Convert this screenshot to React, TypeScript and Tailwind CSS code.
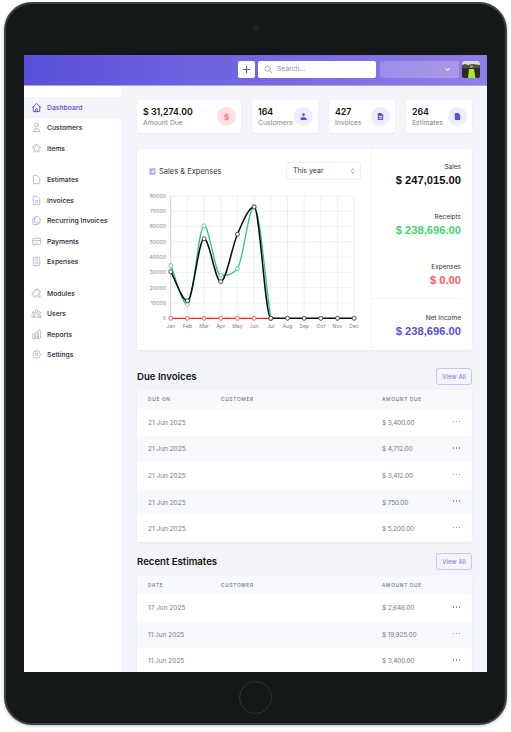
import type { ReactNode } from 'react'
import {
  HiOutlineHome,
  HiOutlineUser,
  HiOutlineStar,
  HiOutlineDocument,
  HiOutlineDocumentText,
  HiOutlineDocumentDuplicate,
  HiOutlineCreditCard,
  HiOutlineCalculator,
  HiOutlinePuzzle,
  HiOutlineUserGroup,
  HiOutlineChartBar,
  HiOutlineCog,
  HiOutlineSearch,
  HiOutlineSelector,
  HiChevronDown,
  HiPlus,
  HiUser,
  HiDocumentText,
  HiDocument,
  HiChartSquareBar,
} from 'react-icons/hi'

const MONTHS = ['Jan', 'Feb', 'Mar', 'Apr', 'May', 'Jun', 'Jul', 'Aug', 'Sep', 'Oct', 'Nov', 'Dec']
const TICKS = [80000, 70000, 60000, 50000, 40000, 30000, 20000, 10000, 0]

const SALES = [30500, 11500, 52000, 24000, 55000, 72800, 0, 0, 0, 0, 0, 0]
const RECEIPTS = [34500, 9000, 60500, 28000, 32500, 73000, 0]
const EXPENSES = [0, 0, 0, 0, 0, 0, 0]

const chartX = (i: number) => 33.7 + i * 16.68
const chartY = (v: number) => 127.3 - (v / 80000) * 122.3

// monotone spline, flat at every peak and dip like the chart lib does it
function linePath(data: number[]) {
  const pts = data.map((v, i) => [chartX(i), chartY(v)])
  const dx = 16.68
  const delta = pts.slice(1).map((p, i) => (p[1] - pts[i][1]) / dx)
  const m = pts.map((_, i) => {
    if (i === 0) return delta[0]
    if (i === pts.length - 1) return delta[i - 1]
    return delta[i - 1] * delta[i] <= 0 ? 0 : (delta[i - 1] + delta[i]) / 2
  })
  delta.forEach((d, i) => {
    if (d === 0) {
      m[i] = 0
      m[i + 1] = 0
      return
    }
    const a = m[i] / d
    const b = m[i + 1] / d
    const s = Math.hypot(a, b)
    if (s > 3) {
      m[i] = (a * 3 * d) / s
      m[i + 1] = (b * 3 * d) / s
    }
  })
  let path = `M${pts[0][0]} ${pts[0][1]}`
  for (let i = 1; i < pts.length; i++) {
    const [x0, y0] = pts[i - 1]
    const [x1, y1] = pts[i]
    path += ` C${x0 + dx / 3} ${y0 + (m[i - 1] * dx) / 3} ${x1 - dx / 3} ${y1 - (m[i] * dx) / 3} ${x1} ${y1}`
  }
  return path
}

function Series({ data, color, width = 1.3 }: { data: number[]; color: string; width?: number }) {
  return (
    <g>
      <path d={linePath(data)} fill="none" stroke={color} strokeWidth={width} />
      {data.map((v, i) => (
        <circle key={i} cx={chartX(i)} cy={chartY(v)} r="2" fill="#fff" stroke={color} strokeWidth="0.7" />
      ))}
    </g>
  )
}

function Chart() {
  return (
    <svg width="234" height="144" viewBox="0 0 234 144" className="block">
      {TICKS.map((t) => (
        <g key={t}>
          <line x1="33.7" x2="217" y1={chartY(t)} y2={chartY(t)} stroke="#ececec" strokeWidth="0.8" />
          <text x="29" y={chartY(t) + 1.9} textAnchor="end" fontSize="5.2" fill="#808080" fontFamily="Inter, sans-serif">
            {t}
          </text>
        </g>
      ))}
      {MONTHS.map((m, i) => (
        <g key={m}>
          <line x1={chartX(i)} x2={chartX(i)} y1="5" y2="127.3" stroke={i === 0 ? '#c4c4c4' : '#ececec'} strokeWidth="0.8" />
          <text x={chartX(i)} y="137" textAnchor="middle" fontSize="5.2" fill="#808080" fontFamily="Inter, sans-serif">
            {m}
          </text>
        </g>
      ))}
      <Series data={EXPENSES} color="#ff1f1f" />
      <Series data={RECEIPTS} color="#2cc196" />
      <Series data={SALES} color="#0b0b0b" width={1.5} />
    </svg>
  )
}

function Avatar() {
  return (
    <svg width="18" height="17" viewBox="0 0 18 17" className="-ml-[1px] rounded-[2px]">
      <rect width="18" height="17" fill="#2b2a24" />
      <rect width="18" height="4" fill="#d8dcd6" />
      <path d="M0 4l3-1 3 1 4-1 8 1v3H0z" fill="#4a5346" />
      <circle cx="9.5" cy="5.5" r="1.6" fill="#b98a68" />
      <path d="M6 17l1-9h5l1.5 9z" fill="#a6e825" />
    </svg>
  )
}

type NavEntry = { label: string; icon: ReactNode; active?: boolean }

const ic = 'h-[11px] w-[11px] text-[#aeb8ca]'

const NAV: NavEntry[][] = [
  [
    { label: 'Dashboard', icon: <HiOutlineHome className="h-[11px] w-[11px] text-[#5851d8]" />, active: true },
    { label: 'Customers', icon: <HiOutlineUser className={ic} /> },
    { label: 'Items', icon: <HiOutlineStar className={ic} /> },
  ],
  [
    { label: 'Estimates', icon: <HiOutlineDocument className={ic} /> },
    { label: 'Invoices', icon: <HiOutlineDocumentText className={ic} /> },
    { label: 'Recurring Invoices', icon: <HiOutlineDocumentDuplicate className={ic} /> },
    { label: 'Payments', icon: <HiOutlineCreditCard className={ic} /> },
    { label: 'Expenses', icon: <HiOutlineCalculator className={ic} /> },
  ],
  [
    { label: 'Modules', icon: <HiOutlinePuzzle className={ic} /> },
    { label: 'Users', icon: <HiOutlineUserGroup className={ic} /> },
    { label: 'Reports', icon: <HiOutlineChartBar className={ic} /> },
    { label: 'Settings', icon: <HiOutlineCog className={ic} /> },
  ],
]

function Sidebar() {
  return (
    <aside className="flex w-[97px] shrink-0 flex-col gap-[11px] bg-white pt-[11px]">
      {NAV.map((group, i) => (
        <div key={i} className="flex flex-col">
          {group.map((item) => (
            <div
              key={item.label}
              className={`flex h-[20.5px] items-center gap-[5px] pl-[7px] text-[6.8px] font-medium ${
                item.active ? 'bg-[#f3f5fa] text-[#5851d8]' : 'text-[#1f2430]'
              }`}
            >
              {item.icon}
              <span className="pt-[1px]">{item.label}</span>
            </div>
          ))}
        </div>
      ))}
    </aside>
  )
}

function StatCard({
  value,
  label,
  icon,
  className,
}: {
  value: string
  label: string
  icon: ReactNode
  className: string
}) {
  return (
    <div className={`flex h-[33px] items-center justify-between rounded-[2px] bg-white pl-[6px] pr-[5px] shadow-[0_1px_2px_rgba(40,50,90,0.08)] ${className}`}>
      <div>
        <div className="text-[8.8px] leading-[11px] font-semibold text-[#111]">{value}</div>
        <div className="text-[6.8px] leading-[11px] whitespace-nowrap text-[#7b8496]">{label}</div>
      </div>
      {icon}
    </div>
  )
}

function Badge({ red, children }: { red?: boolean; children: ReactNode }) {
  return (
    <div className={`flex h-[19px] w-[19px] shrink-0 items-center justify-center rounded-full ${red ? 'bg-[#fde0e2] text-[#fb6b73]' : 'bg-[#eaedfb] text-[#5851d8]'}`}>
      {children}
    </div>
  )
}

function Figure({ label, value, color }: { label: string; value: string; color: string }) {
  return (
    <div className="text-right">
      <div className="text-[6.5px] leading-[10px] text-[#333]">{label}</div>
      <div className={`mt-[1px] font-['Liberation_Sans',sans-serif] text-[11.2px] leading-[14px] font-bold ${color}`}>{value}</div>
    </div>
  )
}

function TableSection({
  title,
  first,
  rows,
  className,
}: {
  title: string
  first: string
  rows: [string, string][]
  className?: string
}) {
  return (
    <section className={className}>
      <div className="flex h-[17px] items-center justify-between">
        <h2 className="pt-[1px] text-[9.6px] font-semibold text-[#111]">{title}</h2>
        <div className="flex h-[17px] w-[36px] items-center justify-center rounded-[3px] border-[1.5px] border-[#c9c6f3] text-[6.2px] text-[#7a73e0]">
          View All
        </div>
      </div>
      <div className="mt-[5px] overflow-hidden rounded-[3px] bg-white shadow-[0_1px_2px_rgba(40,50,90,0.08)]">
        <div className="grid h-[19px] grid-cols-[73px_161px_1fr] items-center bg-[#f8f9fc] pt-[1px] pl-[11px] text-[4.8px] font-medium tracking-[0.7px] text-[#6b7488]">
          <span>{first}</span>
          <span>CUSTOMER</span>
          <span>AMOUNT DUE</span>
        </div>
        {rows.map(([date, amount], i) => (
          <div
            key={i}
            className={`grid h-[26.6px] grid-cols-[73px_161px_1fr_auto] items-center pl-[11px] pr-[12px] text-[6.5px] leading-[10px] text-[#6f788b] ${
              i % 2 ? 'bg-[#f8f9fc]' : 'bg-white'
            }`}
          >
            <span className="pt-[1px]">{date}</span>
            <span />
            <span className="pt-[1px] tracking-[-0.15px]">{amount}</span>
            <span className="flex gap-[1.5px] pb-[2px]">
              <i className="h-[1.5px] w-[1.5px] rounded-full bg-[#7b8496]" />
              <i className="h-[1.5px] w-[1.5px] rounded-full bg-[#7b8496]" />
              <i className="h-[1.5px] w-[1.5px] rounded-full bg-[#7b8496]" />
            </span>
          </div>
        ))}
      </div>
    </section>
  )
}

export default function App() {
  return (
    <div className="h-[732px] w-[511px] overflow-hidden bg-white pt-[2px] pl-[4px] font-[Inter,sans-serif]">
      <div className="flex h-[723px] w-[503px] flex-col items-center rounded-[28px] border-2 border-[#3b4245] bg-[#151819] shadow-[0_1px_3px_rgba(0,0,0,0.25)]">
        <div className="flex h-[51px] w-full items-start justify-center pt-[21px]">
          <div className="h-[6px] w-[6px] rounded-full border border-[#25292b] bg-[#191c1e]" />
        </div>
        <div className="flex h-[617px] w-[463px] shrink-0 flex-col overflow-hidden bg-[#f3f5fa]">
          <header className="flex h-[31px] shrink-0 items-center justify-end gap-[4px] border-b border-[#a9a3f0] bg-gradient-to-r from-[#5a4fd9] to-[#8f7ee8] pr-[7px] pb-[1px]">
            <div className="flex h-[17px] w-[17px] items-center justify-center rounded-[2px] bg-white">
              <HiPlus className="h-[11px] w-[11px] text-[#5c6575]" />
            </div>
            <div className="-ml-[1px] flex h-[17px] w-[118px] items-center gap-[4px] rounded-[2px] bg-white pl-[6px]">
              <HiOutlineSearch className="h-[9px] w-[9px] text-[#8b93a3]" />
              <span className="text-[6.8px] text-[#8b93a3]">Search...</span>
            </div>
            <div className="flex h-[17px] w-[79px] items-center justify-end rounded-[2px] bg-gradient-to-r from-[#9a8fe9] to-[#ac97e6] pr-[7px]">
              <HiChevronDown className="h-[9px] w-[9px] text-white" />
            </div>
            <Avatar />
          </header>
          <div className="flex min-h-0 flex-1">
            <Sidebar />
            <main className="min-w-0 flex-1 pt-[14px] pl-[16px] pr-[15px]">
              <div className="flex gap-[11px]">
                <StatCard
                  className="w-[104px]"
                  value="$ 31,274.00"
                  label="Amount Due"
                  icon={
                    <Badge red>
                      <span className="text-[8px] font-semibold">$</span>
                    </Badge>
                  }
                />
                <StatCard className="w-[66px]" value="164" label="Customers" icon={<Badge><HiUser className="h-[9px] w-[9px]" /></Badge>} />
                <StatCard className="w-[66px]" value="427" label="Invoices" icon={<Badge><HiDocumentText className="h-[9px] w-[9px]" /></Badge>} />
                <StatCard className="w-[66px]" value="264" label="Estimates" icon={<Badge><HiDocument className="h-[9px] w-[9px]" /></Badge>} />
              </div>

              <div className="mt-[16px] flex h-[201px] rounded-[2px] bg-white shadow-[0_1px_2px_rgba(40,50,90,0.08)]">
                <div className="w-[234px] shrink-0 pt-[13px]">
                  <div className="flex h-[18px] items-center justify-between pr-[10px] pl-[11px]">
                    <div className="flex items-center gap-[2px] text-[7.5px] text-[#333]">
                      <HiChartSquareBar className="h-[9px] w-[9px] text-[#b3aaf0]" />
                      <span className="pt-[1px]">Sales &amp; Expenses</span>
                    </div>
                    <div className="flex h-[18px] w-[75px] items-center justify-between rounded-[2px] border border-[#f0f1f5] pl-[6px] pr-[3px] text-[7px] text-[#333]">
                      <span className="pt-[1px]">This year</span>
                      <HiOutlineSelector className="h-[8px] w-[8px] text-[#667085]" />
                    </div>
                  </div>
                  <div className="mt-[11px]">
                    <Chart />
                  </div>
                </div>
                <div className="flex flex-1 flex-col border-l border-[#f3f4f8] pr-[11px]">
                  <div className="flex flex-1 flex-col gap-[25px] border-b border-[#f3f4f8] pt-[13px]">
                    <Figure label="Sales" value="$ 247,015.00" color="text-[#111]" />
                    <Figure label="Receipts" value="$ 238,696.00" color="text-[#45d36f]" />
                    <Figure label="Expenses" value="$ 0.00" color="text-[#fb5a62]" />
                  </div>
                  <div className="h-[51px] pt-[14px]">
                    <Figure label="Net Income" value="$ 238,696.00" color="text-[#5851d8]" />
                  </div>
                </div>
              </div>

              <TableSection
                className="mt-[18px]"
                title="Due Invoices"
                first="DUE ON"
                rows={[
                  ['21 Jun 2025', '$ 3,400.00'],
                  ['21 Jun 2025', '$ 4,712.00'],
                  ['21 Jun 2025', '$ 3,412.00'],
                  ['21 Jun 2025', '$ 750.00'],
                  ['21 Jun 2025', '$ 5,200.00'],
                ]}
              />
              <TableSection
                className="mt-[11.5px]"
                title="Recent Estimates"
                first="DATE"
                rows={[
                  ['17 Jun 2025', '$ 2,646.00'],
                  ['11 Jun 2025', '$ 19,925.00'],
                  ['11 Jun 2025', '$ 3,400.00'],
                ]}
              />
            </main>
          </div>
        </div>
        <div className="flex w-full flex-1 items-center justify-center">
          <div className="h-[33px] w-[33px] rounded-full border-[1.5px] border-[#2f3437]" />
        </div>
      </div>
    </div>
  )
}
